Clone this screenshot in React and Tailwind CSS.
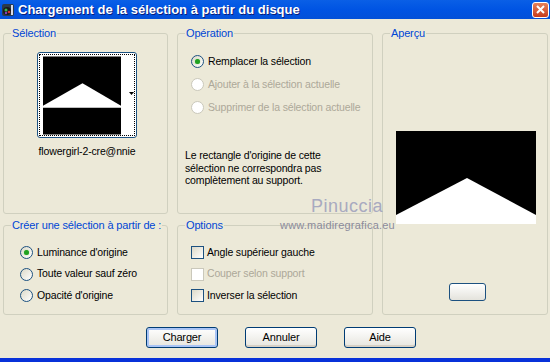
import { useState } from 'react';

const font = { fontFamily: '"Liberation Sans", Arial, sans-serif' };

function Radio({ label, checked, disabled, row = 'h-[22px]' }) {
  return (
    <div className={`flex items-center whitespace-nowrap ${row}`}>
      <span
        className={`flex h-[13px] w-[13px] shrink-0 items-center justify-center rounded-full border ${
          disabled ? 'border-[#cac8bb] bg-white' : 'border-[#1c5180] bg-gradient-to-br from-[#dcd9c8] to-white'
        }`}
      >
        {checked && <span className="h-[5px] w-[5px] rounded-full bg-[#21a121] shadow-[0_0_1px_#64d264]" />}
      </span>
      <span className={`ml-[4px] ${disabled ? 'text-[#aca899]' : 'text-black'}`}>{label}</span>
    </div>
  );
}

function Check({ label, disabled }) {
  return (
    <div className="flex h-[21.5px] items-center whitespace-nowrap">
      <span
        className={`h-[13px] w-[13px] shrink-0 border ${
          disabled ? 'border-[#cac8bb] bg-white' : 'border-[#1c5180] bg-gradient-to-br from-[#dcd9c8] to-white'
        }`}
      />
      <span className={`ml-[3px] ${disabled ? 'text-[#aca899]' : 'text-black'}`}>{label}</span>
    </div>
  );
}

function Group({ title, className, children }) {
  return (
    <fieldset className={`min-w-0 rounded-[3px] border border-[#d0d0bf] ${className}`}>
      <legend className="ml-[7px] whitespace-nowrap px-[1px] text-[11px] leading-[13px] text-[#0046d5]">{title}</legend>
      {children}
    </fieldset>
  );
}

function Button({ label, isDefault }) {
  return (
    <button
      className={`h-[21px] w-[72px] rounded-[3px] border border-[#003c74] bg-gradient-to-b from-white to-[#e6e5de] text-[11px] text-black ${
        isDefault ? 'shadow-[inset_0_0_0_2px_#a9c4f5]' : 'shadow-[inset_0_-2px_0_#d6d0c5]'
      }`}
    >
      {label}
    </button>
  );
}

function Thumb({ w, h, apex, base, bottom }) {
  return (
    <svg width={w} height={h} viewBox={`0 0 ${w} ${h}`} className="block">
      <rect width={w} height={h} fill="#000" />
      <polygon points={`0,${base} ${apex[0]},${apex[1]} ${w},${base} ${w},${bottom} 0,${bottom}`} fill="#fff" />
    </svg>
  );
}

export default function App() {
  const [op] = useState('replace');
  const [source] = useState('luminance');

  return (
    <div
      className="relative h-[362px] w-[550px] overflow-hidden bg-[#ece9d8] text-[10.5px] tracking-[-0.15px]"
      style={font}
    >
      {/* title bar */}
      <div className="flex h-[19px] items-center bg-gradient-to-b from-[#0a5fe6] via-[#0054e3] to-[#0350d8]">
        <svg width="14" height="14" viewBox="0 0 14 14" className="ml-[1px]">
          <rect x="1" y="1" width="12" height="12" rx="2" fill="#2b3a4a" />
          <circle cx="6" cy="8" r="4" fill="#1a1a1a" />
          <circle cx="5" cy="7" r="1.5" fill="#3cb44a" />
          <circle cx="8" cy="9" r="1.3" fill="#d03030" />
          <circle cx="5" cy="10" r="1.2" fill="#8040c0" />
          <rect x="10" y="2" width="2" height="10" fill="#d8dce8" />
        </svg>
        <span className="ml-[3px] whitespace-nowrap text-[13px] font-bold tracking-normal text-white [text-shadow:1px_1px_0_#0a1e7a]">
          Chargement de la sélection à partir du disque
        </span>
        <span className="ml-auto mr-[1px] flex h-[16px] w-[17px] items-center justify-center rounded-[3px] border border-white bg-gradient-to-b from-[#e6805a] to-[#c6391a]">
          <svg width="9" height="9" viewBox="0 0 9 9">
            <path d="M1 1 L8 8 M8 1 L1 8" stroke="#fff" strokeWidth="2" />
          </svg>
        </span>
      </div>

      {/* groups */}
      <div className="grid grid-cols-[165px_196px_166px] grid-rows-[187px_96px] gap-x-[9px] gap-y-[5px] pl-[3px] pt-[8px]">
        <Group title="Sélection">
          <div className="pl-[33px] pt-[12px]">
            <div className="relative h-[86px] w-[100px] rounded-[3px] border border-[#1c5180] bg-white p-[1px]">
              <div className="flex h-full w-full border border-dotted border-black pl-[3px] pt-[1px]">
                <Thumb w={79} h={79} apex={[40, 27]} base={50} bottom={52} />
                <div className="flex flex-1 items-center justify-center pb-[3px]">
                  <svg width="5" height="3" viewBox="0 0 5 3" className="mb-[2px] ml-[8px]">
                    <polygon points="0,0 5,0 2.5,3" fill="#000" />
                  </svg>
                </div>
              </div>
            </div>
            <div className="mt-[6px] w-[100px] whitespace-nowrap text-center">flowergirl-2-cre@nnie</div>
          </div>
        </Group>

        <Group title="Opération">
          <div className="pl-[13px] pt-[10px]">
            <Radio row="h-[23px]" label="Remplacer la sélection" checked={op === 'replace'} />
            <Radio row="h-[23px]" label="Ajouter à la sélection actuelle" disabled />
            <Radio row="h-[23px]" label="Supprimer de la sélection actuelle" disabled />
          </div>
          <p className="mt-[30px] whitespace-nowrap pl-[7px] leading-[12.5px]">
            Le rectangle d'origine de cette
            <br />
            sélection ne correspondra pas
            <br />
            complètement au support.
          </p>
        </Group>

        <Group title="Aperçu" className="row-span-2">
          <div className="pl-[13px] pt-[91px]">
            <Thumb w={140} h={93} apex={[71, 47]} base={84} bottom={93} />
          </div>
          <div className="ml-[66px] mt-[59px] h-[18px] w-[37px] rounded-[3px] border border-[#1c5180] bg-gradient-to-b from-white to-[#e4e3dc]" />
        </Group>

        <Group title="Créer une sélection à partir de :">
          <div className="pl-[16px] pt-[10px]">
            <Radio row="h-[21.5px]" label="Luminance d'origine" checked={source === 'luminance'} />
            <Radio row="h-[21.5px]" label="Toute valeur sauf zéro" />
            <Radio row="h-[21.5px]" label="Opacité d'origine" />
          </div>
        </Group>

        <Group title="Options">
          <div className="pl-[13px] pt-[10px]">
            <Check label="Angle supérieur gauche" />
            <Check label="Couper selon support" disabled />
            <Check label="Inverser la sélection" />
          </div>
        </Group>
      </div>

      {/* buttons */}
      <div className="mt-[12px] flex gap-[27px] pl-[146px]">
        <Button label="Charger" isDefault />
        <Button label="Annuler" />
        <Button label="Aide" />
      </div>

      <div className="absolute bottom-0 left-0 h-[4px] w-full bg-[#0831d9]" />

      {/* watermark */}
      <span className="pointer-events-none absolute left-[311px] top-[196px] text-[18px] leading-[20px] tracking-[0.5px] text-[#a8aac0]">
        Pinuccia
      </span>
      <span className="pointer-events-none absolute left-[280px] top-[219px] text-[11px] leading-[12px] tracking-[0.2px] text-[#8b8b9b]">
        www.maidiregrafica.eu
      </span>
    </div>
  );
}
